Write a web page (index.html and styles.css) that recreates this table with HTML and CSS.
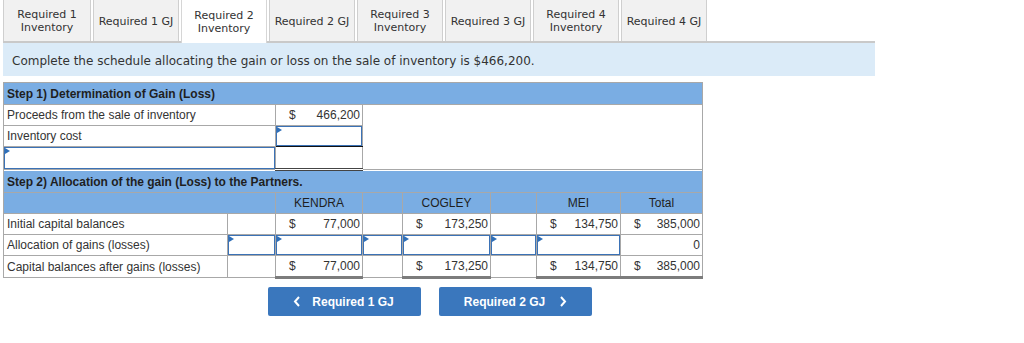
FILE: index.html
```html
<!DOCTYPE html>
<html>
<head>
<meta charset="utf-8">
<link rel="stylesheet" href="styles.css">
</head>
<body>
<div class="page">
  <nav class="tabs">
    <div class="tab t1">Required 1<br>Inventory</div>
    <div class="tab">Required 1 GJ</div>
    <div class="tab active">Required 2<br>Inventory</div>
    <div class="tab">Required 2 GJ</div>
    <div class="tab">Required 3<br>Inventory</div>
    <div class="tab">Required 3 GJ</div>
    <div class="tab">Required 4<br>Inventory</div>
    <div class="tab">Required 4 GJ</div>
  </nav>
  <div class="info">Complete the schedule allocating the gain or loss on the sale of inventory is $466,200.</div>

  <table class="sched">
    <colgroup>
      <col class="c1"><col class="c2"><col class="c3"><col class="c4">
      <col class="c5"><col class="c6"><col class="c7"><col class="c8">
    </colgroup>
    <tr class="hdr"><td colspan="8">Step 1) Determination of Gain (Loss)</td></tr>
    <tr>
      <td colspan="2" class="lbl">Proceeds from the sale of inventory</td>
      <td class="val"><span>$</span><span>466,200</span></td>
      <td colspan="5" class="void"></td>
    </tr>
    <tr>
      <td colspan="2" class="lbl">Inventory cost</td>
      <td class="inp flag under"></td>
      <td colspan="5" class="void"></td>
    </tr>
    <tr class="tall">
      <td colspan="2" class="inp flag"></td>
      <td class="dbl"></td>
      <td colspan="5" class="void"></td>
    </tr>
    <tr class="hdr"><td colspan="8">Step 2) Allocation of the gain (Loss) to the Partners.</td></tr>
    <tr class="colhdr">
      <td colspan="2"></td><td>KENDRA</td><td></td><td>COGLEY</td><td></td><td>MEI</td><td>Total</td>
    </tr>
    <tr>
      <td class="lbl">Initial capital balances</td>
      <td></td>
      <td class="val"><span>$</span><span>77,000</span></td>
      <td></td>
      <td class="val"><span>$</span><span>173,250</span></td>
      <td></td>
      <td class="val"><span>$</span><span>134,750</span></td>
      <td class="val"><span>$</span><span>385,000</span></td>
    </tr>
    <tr>
      <td class="lbl">Allocation of gains (losses)</td>
      <td class="inp flag"></td>
      <td class="inp flag"></td>
      <td class="inp flag"></td>
      <td class="inp flag"></td>
      <td class="inp flag"></td>
      <td class="inp flag"></td>
      <td class="num">0</td>
    </tr>
    <tr>
      <td class="lbl">Capital balances after gains (losses)</td>
      <td></td>
      <td class="val total"><span>$</span><span>77,000</span></td>
      <td></td>
      <td class="val total"><span>$</span><span>173,250</span></td>
      <td></td>
      <td class="val total"><span>$</span><span>134,750</span></td>
      <td class="val total"><span>$</span><span>385,000</span></td>
    </tr>
  </table>

  <div class="navbtns">
    <button class="btn prev">
      <svg width="8" height="11" viewBox="0 0 8 11"><polyline points="6,1 2,5.5 6,10" fill="none" stroke="#fff" stroke-width="2"/></svg>
      <span>Required 1 GJ</span>
    </button>
    <button class="btn next">
      <span>Required 2 GJ</span>
      <svg width="8" height="11" viewBox="0 0 8 11"><polyline points="2,1 6,5.5 2,10" fill="none" stroke="#fff" stroke-width="2"/></svg>
    </button>
  </div>
</div>
</body>
</html>
```

FILE: styles.css
```css
html, body {
  margin: 0;
  padding: 0;
  background: #fff;
}

.page {
  padding-left: 3px;
}

.tabs {
  display: flex;
  width: 872px;
  height: 41px;
  border-bottom: 2px solid #c9c9c9;
  font-family: "DejaVu Sans", Verdana, sans-serif;
  font-size: 11px;
  color: #333;
}

.tab {
  box-sizing: border-box;
  width: 86px;
  height: 41px;
  margin-right: 2px;
  background: #f1f1f1;
  border: 1px solid #cfcfcf;
  border-top: none;
  border-bottom: none;
  display: flex;
  align-items: center;
  justify-content: center;
  text-align: center;
  line-height: 13px;
  padding-top: 1px;
}

.tab.t1 {
  width: 88px;
}

.tab.active {
  background: #fff;
  height: 43px;
  margin-bottom: -2px;
  border-color: #d6d6d6;
}

.info {
  box-sizing: border-box;
  width: 872px;
  height: 33px;
  background: #dbebf8;
  padding-left: 9px;
  font-family: "DejaVu Sans", Verdana, sans-serif;
  font-size: 12px;
  color: #333;
  display: flex;
  align-items: center;
  padding-top: 2px;
}

.sched {
  margin-top: 6px;
  border-collapse: collapse;
  table-layout: fixed;
  width: 700px;
  border: 1px solid #9a9a9a;
  font-family: "Liberation Sans", Arial, sans-serif;
  font-size: 12px;
  color: #333;
}

.c1 { width: 224px; }
.c2 { width: 48px; }
.c3 { width: 87px; }
.c4 { width: 40px; }
.c5 { width: 88px; }
.c6 { width: 46px; }
.c7 { width: 84px; }
.c8 { width: 82px; }

.sched td {
  border: 1px solid #a8a8a8;
  height: 20px;
  padding: 0 3px;
  white-space: nowrap;
  overflow: hidden;
}

.sched tr.tall td {
  height: 21px;
}

.sched tr.hdr td {
  background: #7aade3;
  font-weight: bold;
  color: #1f1f1f;
  height: 21px;
  padding-left: 3px;
}

.sched tr.colhdr td {
  background: #7aade3;
  text-align: center;
  color: #1f1f1f;
}

.sched td.lbl {
  padding-left: 3px;
}

.sched td.val {
  padding: 0 2px 0 13px;
}

.sched td.val span:last-child {
  float: right;
}

.sched td.num {
  text-align: right;
  padding-right: 2px;
}

.sched td.void {
  border-top: none;
  border-bottom: none;
  border-left: none;
}

.sched td.inp {
  box-shadow: inset 0 0 0 1px #3b72b6;
}

.sched td.flag {
  position: relative;
}

.sched td.flag::before {
  content: "";
  position: absolute;
  left: 1px;
  top: 1px;
  border-left: 5px solid #2f6fb8;
  border-top: 3px solid transparent;
  border-bottom: 3px solid transparent;
}

.sched td.under {
  border-bottom: 1px solid #111;
}

.sched td.dbl {
  border-bottom: 3px double #444;
}

.sched td.total {
  border-bottom: 3px solid #7c7c7c;
}

.navbtns {
  display: flex;
  gap: 18px;
  margin: 8px 0 0 265px;
}

.btn {
  width: 153px;
  height: 29px;
  border: none;
  border-radius: 2px;
  background: #3a77bd;
  color: #fff;
  font-family: "Liberation Sans", Arial, sans-serif;
  font-weight: bold;
  font-size: 12px;
  display: flex;
  align-items: center;
  justify-content: center;
  padding: 0;
}

.btn.prev {
  gap: 11px;
  padding-right: 2px;
}

.btn.next {
  gap: 14px;
}
```
